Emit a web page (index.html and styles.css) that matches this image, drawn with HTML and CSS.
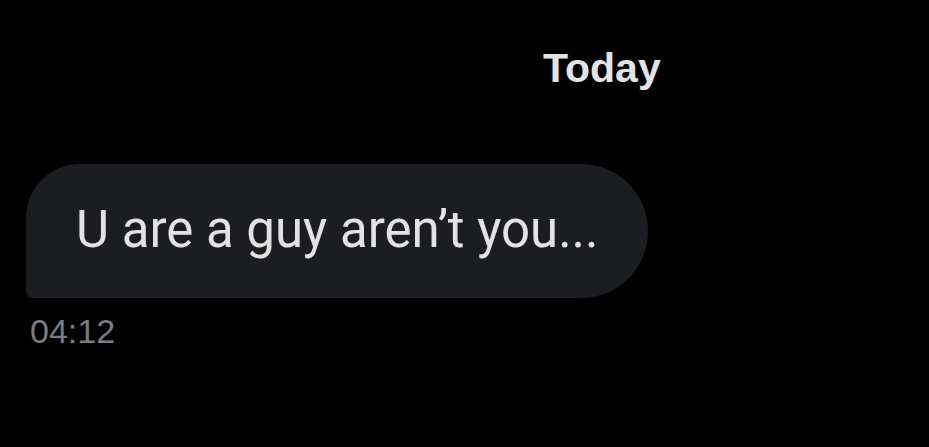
FILE: index.html
```html
<!DOCTYPE html>
<html lang="en">
<head>
    <meta charset="UTF-8">
    <meta name="viewport" content="width=device-width, initial-scale=1.0">
    <title>Chat</title>
    <link rel="stylesheet" href="styles.css">
</head>
<body>
    <div class="chat">
        <div class="day">Today</div>
        <div class="message">
            <div class="bubble">U are a guy aren’t you...</div>
            <div class="time">04:12</div>
        </div>
    </div>
</body>
</html>
```

FILE: styles.css
```css
body {
    margin: 0;
    padding: 0;
    background: #000;
    font-family: Roboto, "Liberation Sans", sans-serif;
    min-height: 100vh;
}

.chat {
    display: flex;
    flex-direction: column;
    padding: 40px 0 0 26px;
}

.day {
    color: #e4e4e4;
    font-family: "Liberation Sans", Arial, sans-serif;
    font-weight: bold;
    font-size: 41px;
    line-height: 56px;
    padding-left: 517px;
}

.message {
    display: flex;
    flex-direction: column;
    align-items: flex-start;
    margin-top: 68px;
}

.bubble {
    background: #1c1d20;
    color: #e2e2e2;
    font-size: 51px;
    line-height: 132px;
    height: 134px;
    padding: 0 40px 0 50px;
    border-radius: 54px 67px 67px 6px;
    box-sizing: border-box;
    width: 622px;
}

.time {
    color: #7b7c80;
    font-family: "Liberation Sans", Arial, sans-serif;
    font-size: 34px;
    margin-top: 14px;
    padding-left: 4px;
}
```
